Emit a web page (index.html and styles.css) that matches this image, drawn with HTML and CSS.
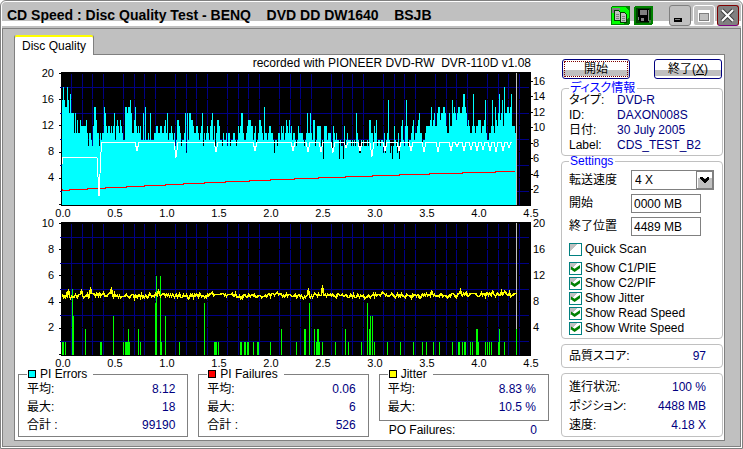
FILE: index.html
```html
<!DOCTYPE html>
<html lang="ja">
    <head>
        <meta charset="utf-8">
        <title>CD Speed : Disc Quality Test</title>
        <link rel="stylesheet" href="styles.css">
    </head>
    <body>

        <div class="window">
            <div class="titlebar">
                <h1 class="caption">CD Speed : Disc Quality Test - BENQ &nbsp;&nbsp; DVD DD DW1640 &nbsp;&nbsp; BSJB</h1>
                <button type="button" class="tool" aria-label="Copy">
                    <svg width="19" height="19" viewBox="0 0 19 19" shape-rendering="crispEdges">
                        <rect width="19" height="19" rx="2" fill="#008000"/>
                        <path d="M1 1h13l4 4v6l-5 7H1z" fill="#00ff00"/>
                        <path d="M1 2h8v2H5v3H1z" fill="#808080"/>
                        <path d="M3.5 4.500h4l2 2v8h-6z" fill="#c0c0c0" stroke="#004000"/>
                        <path d="M9.500 6.500h4l2 2v8h-6z" fill="#c0c0c0" stroke="#004000"/>
                        <path d="M5 8h3M5 10h3M5 12h3M11 10h3M11 12h3M11 14h3" stroke="#808080"/>
                    </svg>
                </button>
                <button type="button" class="tool" aria-label="Save">
                    <svg width="19" height="19" viewBox="0 0 19 19" shape-rendering="crispEdges">
                        <rect width="19" height="19" rx="2" fill="#008000"/>
                        <rect x="2" y="2" width="15" height="15" fill="#004000"/>
                        <path d="M4 3h11v13H6l-2-2z" fill="#000"/>
                        <path d="M6 4h7v5H6z" fill="#808080"/>
                        <path d="M14 4h1v11h-1zM7 12h3v3H7zM4 11h1v3H4z" fill="#808080"/>
                        <path d="M15 14h2v3h-2z" fill="#408040"/>
                    </svg>
                </button>
                <div class="winbtns">
                    <button type="button" class="winbtn min" aria-label="Minimize">
                        <svg width="20" height="20" viewBox="0 0 20 20" shape-rendering="crispEdges">
                            <rect x="4" y="12" width="8" height="4" fill="#000"/>
                            <rect x="5" y="13" width="5" height="1" fill="#808080"/>
                        </svg>
                    </button>
                    <button type="button" class="winbtn max" aria-label="Maximize" disabled>
                        <svg width="20" height="20" viewBox="0 0 20 20" shape-rendering="crispEdges">
                            <path d="M4.500 4.500h11v11h-11z" fill="#c0c0c0" stroke="#fff"/>
                            <path d="M4 4h12v3H4z" fill="#fff"/>
                            <path d="M5.500 7.500h9v7h-9z" fill="#c0c0c0" stroke="#808080"/>
                        </svg>
                    </button>
                    <button type="button" class="winbtn close" aria-label="Close">
                        <svg width="20" height="20" viewBox="0 0 20 20">
                            <path d="M4 4L15 15M15 4L4 15" stroke="#404040" stroke-width="4"/>
                            <path d="M4 4L15 15M15 4L4 15" stroke="#fff" stroke-width="2"/>
                        </svg>
                    </button>
                </div>
            </div>

            <div class="client">
                <div class="tabs">
                    <button type="button" class="tab">Disc Quality</button>
                </div>

                <div class="panel">
                    <div class="left">
                        <p class="recorder">recorded with PIONEER DVD-RW &nbsp;DVR-110D v1.08</p>
                        <svg class="chart" id="pie" viewBox="0 0 531 150"></svg>
                        <svg class="chart" id="pif" viewBox="0 0 531 146"></svg>

                        <div class="stats">
                            <fieldset class="stat">
                                <legend><i class="swatch cyan"></i>PI Errors</legend>
                                <dl>
                                    <dt>平均:</dt><dd>8.12</dd>
                                    <dt>最大:</dt><dd>18</dd>
                                    <dt>合計 :</dt><dd>99190</dd>
                                </dl>
                            </fieldset>
                            <fieldset class="stat">
                                <legend><i class="swatch red"></i>PI Failures</legend>
                                <dl>
                                    <dt>平均:</dt><dd>0.06</dd>
                                    <dt>最大:</dt><dd>6</dd>
                                    <dt>合計 :</dt><dd>526</dd>
                                </dl>
                            </fieldset>
                            <div class="last">
                                <fieldset class="stat jitter">
                                    <legend><i class="swatch yellow"></i>Jitter</legend>
                                    <dl>
                                        <dt>平均:</dt><dd>8.83 %</dd>
                                        <dt>最大:</dt><dd>10.5 %</dd>
                                    </dl>
                                </fieldset>
                                <dl class="po">
                                    <dt>PO Failures:</dt><dd>0</dd>
                                </dl>
                            </div>
                        </div>
                    </div>

                    <div class="right">
                        <div class="buttons">
                            <button type="button" class="btn focused">開始</button>
                            <button type="button" class="btn">終了(<u>X</u>)</button>
                        </div>

                        <fieldset class="group disc">
                            <legend>ディスク情報</legend>
                            <dl>
                                <dt>タイプ:</dt><dd>DVD-R</dd>
                                <dt>ID:</dt><dd>DAXON008S</dd>
                                <dt>日付:</dt><dd>30 July 2005</dd>
                                <dt>Label:</dt><dd>CDS_TEST_B2</dd>
                            </dl>
                        </fieldset>

                        <fieldset class="group settings">
                            <legend>Settings</legend>
                            <div class="field">
                                <label for="speed">転送速度</label>
                                <span class="combo">
                                    <select id="speed">
                                        <option>4 X</option>
                                    </select>
                                    <svg class="arrow" width="17" height="18" viewBox="0 0 17 18" shape-rendering="crispEdges">
                                        <rect x="0.500" y="0.500" width="16" height="17" fill="#fff" stroke="#808080"/>
                                        <rect x="2" y="7" width="14" height="10" fill="#c0c0c0"/>
                                        <path d="M4 6h2l2 2h1l2-2h2v2l-4 4H8L4 8z" fill="#000"/>
                                    </svg>
                                </span>
                            </div>
                            <div class="field">
                                <label for="start">開始</label>
                                <input type="text" id="start" value="0000 MB">
                            </div>
                            <div class="field">
                                <label for="end">終了位置</label>
                                <input type="text" id="end" value="4489 MB">
                            </div>
                            <label class="check quick"><input type="checkbox">Quick Scan</label>
                            <label class="check"><input type="checkbox" checked>Show C1/PIE</label>
                            <label class="check"><input type="checkbox" checked>Show C2/PIF</label>
                            <label class="check"><input type="checkbox" checked>Show Jitter</label>
                            <label class="check"><input type="checkbox" checked>Show Read Speed</label>
                            <label class="check"><input type="checkbox" checked>Show Write Speed</label>
                        </fieldset>

                        <dl class="group score">
                            <dt>品質スコア:</dt><dd>97</dd>
                        </dl>

                        <dl class="group progress">
                            <dt>進行状況:</dt><dd>100 %</dd>
                            <dt>ポジション:</dt><dd>4488 MB</dd>
                            <dt>速度:</dt><dd>4.18 X</dd>
                        </dl>
                    </div>
                </div>
            </div>
        </div>

        <script src="script.js"></script>
    </body>
</html>
```

FILE: styles.css
```css
*{
    box-sizing: border-box;
}

body{
    font-family: "Liberation Sans", "Noto Sans CJK JP", sans-serif;
    font-size: 12px;
    line-height: 15px;
    font-feature-settings: "palt";
    color: #000;
    background-color: #fff;

    margin: 0;
}

h1, p, dl, dd, fieldset{
    margin: 0;
}

button, input, select{
    font: inherit;
    color: inherit;
}

.window{
    min-height: 100vh;
    background-color: #fff;
    border: 1px solid #808080;
    border-radius: 6px 6px 0 0;

    padding: 1px;

    display: flex;
    flex-direction: column;
}

/* title bar */

.titlebar{
    height: 26px;
    background: linear-gradient(#c0c0c0 19px, #fff 19px 24px, #c0c0c0 24px);
    border-radius: 4px 4px 0 0;

    padding: 0 2px 0 5px;

    display: flex;
    align-items: center;
    gap: 4px;
}

.caption{
    font-size: 14px;
    line-height: 26px;
    font-weight: bold;
    white-space: nowrap;

    flex: 1;
}

.tool, .winbtn{
    background: none;
    border: 0;

    padding: 0;

    display: flex;
}

.winbtns{
    display: flex;
    gap: 2px;

    margin-left: 12px;
}

.winbtn{
    width: 22px;
    height: 21px;
    background-color: #c0c0c0;
    border: 1px solid #808080;
    border-radius: 3px;
}

.winbtn.max{
    border-color: #fff;
}

.winbtn.close{
    background-color: #808080;
    border-color: #800000 #800000 #800080;
}

/* tab and its page */

.client{
    background-color: #c0c0c0;
    border: 1px solid #808080;

    padding: 6px 15px 5px 11px;

    flex: 1;
    display: flex;
    flex-direction: column;
}

.tab{
    height: 20px;
    background-color: #fff;
    border: 1px solid #808080;
    border-width: 0 1px 0 1px;
    border-radius: 2px 2px 0 0;
    box-shadow: inset 0 2px #ff0;

    padding: 2px 7px 0;
    margin-bottom: -1px;

    display: block;
    position: relative;
}

.panel{
    background-color: #fff;
    border: 1px solid #808080;

    padding: 0 1px 0 3px;

    flex: 1;
    display: grid;
    grid-template-columns: 1fr 162px;
    gap: 12px;
}

.recorder{
    line-height: 17px;
    text-align: right;

    padding-right: 18px;
}

.chart{
    width: 100%;
    overflow: visible;

    display: block;
}

.chart text{
    font-size: 11px;
}

/* label and value rows */

dl{
    display: grid;
    grid-template-columns: auto auto;
    justify-content: space-between;
}

dd{
    color: #000080;
    text-align: right;
}

.stats{
    display: grid;
    grid-template-columns: 170fr 170fr 170fr;
    column-gap: 10px;
    align-items: start;
}

.stat{
    min-width: 0;
    border: 1px solid #808080;

    padding: 0 12px 2px 8px;
}

.stat legend{
    line-height: 12px;

    padding: 0 6px 0 1px;

    display: flex;
    align-items: center;
    gap: 4px;
}

.stats dl{
    line-height: 18px;
}

.jitter{
    padding-bottom: 4px;
}

.swatch{
    width: 8px;
    height: 8px;
    border: 1px solid #000;
}

.cyan{
    background-color: #0ff;
}

.red{
    background-color: #f00;
}

.yellow{
    background-color: #ff0;
}

.po{
    padding: 0 12px 0 10px;
}

/* right column */

.right{
    padding-top: 4px;
}

.buttons{
    display: flex;
    justify-content: space-between;

    padding: 0 1px;
    margin-bottom: 4px;
}

.btn{
    width: 68px;
    height: 20px;
    line-height: 16px;
    background: linear-gradient(#fff 10px, #c0c0c0 10px 16px, #fff 16px);
    border: 1px solid #000080;
    border-radius: 3px;

    padding: 0;
}

.focused{
    outline: 1px dotted #800000;
    outline-offset: -3px;
}

.group{
    min-width: 0;
    border: 1px solid #c0c0c0;
    border-radius: 4px;

    padding: 0 16px 2px 7px;
}

.group legend{
    line-height: 10px;
    color: #00f;

    padding: 0 2px 0 1px;
}

.disc dl{
    grid-template-columns: 48px 1fr;
}

.disc dd{
    text-align: left;
}

.settings{
    padding-right: 8px;
}

.field{
    display: grid;
    grid-template-columns: 62px 1fr;
    align-items: center;

    margin-top: 4px;
}

.combo{
    position: relative;
}

.field select{
    width: 100%;
    height: 20px;
    appearance: none;
    background-color: #fff;
    border: 1px solid #808080;
    border-radius: 0;

    padding: 0 20px 0 3px;

    display: block;
}

.arrow{
    position: absolute;
    top: 1px;
    right: 1px;
    pointer-events: none;
}

.field input{
    width: 70px;
    height: 19px;
    background-color: #fff;
    border: 1px solid #808080;

    padding: 0 2px;
}

.check{
    height: 15px;

    display: flex;
    align-items: center;
    gap: 3px;
}

.quick{
    margin: 6px 0 4px;
}

.check input{
    width: 13px;
    height: 13px;
    appearance: none;
    background: linear-gradient(135deg, #c0c0c0 32%, #fff 32%);
    border: 1px solid #008080;

    margin: 0;

    display: grid;
    place-items: center;
}

.check input:checked::before{
    content: "";
    width: 9px;
    height: 7px;
    background-color: #008000;
    clip-path: polygon(0 20%, 40% 55%, 100% 0, 100% 45%, 40% 100%, 0 65%);
}

.score{
    line-height: 22px;

    padding-bottom: 0;
    margin-top: 5px;
}

.progress{
    line-height: 19px;

    padding: 4px 16px 1px 7px;
    margin-top: 5px;
}
```

FILE: script.js
```js
const svgns = 'http://www.w3.org/2000/svg';

// plot area inside the svg
const left = 43;
const width = 470;
const height = 134;
const base = 133;

// PI errors for every column, one base 36 digit each
const pie = [
    'gigffigehe', 'eebebdbbdc', 'ccccdb9bba', '9cffdbb9ba', 'bbfecbccbc', 'bceacdcbdc',
    'baaffeffge', 'bbdfcbcbca', 'aeafaabaea', 'aabbccbbcc', 'bbcdbeabbc', 'bab9addcb9',
    'aabe8eaeed', 'dcbbccbabc', 'e9babcbacd', 'eac9bddcaa', '9baab9bb9a', 'abba9acbce',
    'ebaabcdddc', 'cabc9abddc', 'bafbbabccb', 'ba8aa9bbac', 'bcabdcbd',
    'bcabba9acb', 'bbba9abebb', 'ebadd9accc', 'c9a7cccabb', 'b98cbabaa7', 'a997c9abaa',
    'a9a9a9eba8', '8a9a999a9d', 'dbb9cbd9aa', '9aa8b8abga', '8979ca98b7', '9cda9cgc9a',
    'abcdabbcde', 'bb9aabcccc', 'dfcdecceff', 'deeffecbbe', 'ccgefedeff', 'eefhhfecdc',
    'bbchcbccdd', 'dbccdgbaab', 'bcgcbfdceh', 'degcieeffe', 'fhcccb'
].join('');

// PI failures as x, count, number of columns
const pif = [
    [1,1,2],[4,1,1],[11,5,1],[12,3,1],[24,2,1],[39,1,2],[52,3,1],[62,1,1],[64,1,5],[67,2,1],
    [77,2,1],[79,1,1],[94,4,1],[95,6,1],[99,6,1],[100,1,1],[104,3,1],[118,1,1],[143,4,1],
    [153,1,3],[157,1,1],[179,1,2],[183,1,2],[186,1,2],[192,1,1],[196,1,2],[209,1,1],[220,2,1],
    [235,1,1],[243,2,2],[248,4,1],[253,2,1],[255,1,4],[256,2,2],[261,1,1],[274,1,1],[284,2,1],
    [287,1,1],[300,1,1],[306,4,1],[308,2,1],[309,3,1],[311,3,1],[313,1,1],[326,1,1],[339,1,1],
    [352,1,1],[361,1,1],[365,1,1],[372,1,1],[378,1,1],[391,1,1],[397,1,2],[401,1,1],[403,1,2],
    [409,1,1],[411,1,1],[415,2,2],[417,1,1],[424,1,1],[426,1,1],[428,1,1],[430,1,1],[437,1,1],
    [438,2,1],[443,1,1],[455,2,1]
];

function draw(svg, name, attrs, text){
    const el = document.createElementNS(svgns, name);
    for(const key in attrs){
        el.setAttribute(key, attrs[key]);
    }
    if(text !== undefined){
        el.textContent = text;
    }
    svg.appendChild(el);
    return el;
}

function path(svg, d, color, w = 1){
    draw(svg, 'path', {d, fill: 'none', stroke: color, 'stroke-width': w, 'shape-rendering': 'crispEdges'});
}

function drawgrid(svg){
    draw(svg, 'rect', {x: left, y: 0, width, height: height, fill: '#000'});

    const line = {fill: '#000084', 'shape-rendering': 'crispEdges'};
    for(let i = 1; i < 45; i++){
        if(i % 5){
            draw(svg, 'rect', {x: left + Math.round(i * 10.4), y: 2, width: 1, height: base - 2, ...line});
        }
    }

    let gaps = '';
    for(let i = 1; i < 5; i++){
        gaps += `M${left} ${1.5 + i * 26}h${width}`;
    }
    path(svg, gaps, '#000');

    for(let i = 0; i < 5; i++){
        draw(svg, 'rect', {x: left - 1, y: 15 + i * 26, width: width - 1, height: 1, ...line});
    }

    let ticks = '';
    for(let i = 0; i < 6; i++){
        ticks += `M${left - 2} ${1.5 + Math.round(i * 26.2)}h2`;
    }
    path(svg, ticks, '#000');

    for(let i = 0; i < 10; i++){
        draw(svg, 'text', {x: left + 2 + i * 52, y: 145, 'text-anchor': 'middle'}, (i / 2).toFixed(1));
    }
}

function drawpie(){
    const svg = document.querySelector('#pie');
    drawgrid(svg);

    [20, 16, 12, 8, 4].forEach((n, i)=>{
        draw(svg, 'text', {x: left - 7, y: 5 + i * 26, 'text-anchor': 'end'}, n);
    });

    let ticks = '';
    [16, 14, 12, 10, 8, 6, 4, 2].forEach((n, i)=>{
        const y = Math.round(9 + i * 15.45);
        ticks += `M${left + width} ${y + .5}h2`;
        draw(svg, 'text', {x: left + width + 2, y: y + 4}, n);
    });
    path(svg, ticks, '#000');

    let bars = '';
    [...pie].forEach((c, i)=>{
        bars += `M${left + 1.5 + i} ${base}V${Math.round(base - parseInt(c, 36) * 6.55)}`;
    });
    path(svg, bars, '#0ff');

    // write speed
    let red = `M${left + 1} 119v-2`;
    for(let i = 0; i <= 453; i += 3){
        const t = i / 453;
        red += `L${left + 1 + i} ${Math.round(118 - 26 * t + 7 * t * t) + .5}`;
    }
    path(svg, red, '#f00');

    // read speed, with a dip at each of these columns
    const dips = [[76,8],[115,15],[155,9],[194,8],[232,8],[247,9],[260,9],[272,10],[285,5],[299,8],[311,14],
        [324,8],[338,8],[350,8],[363,9],[377,9],[390,8],[396,4],[403,8],[410,7],[416,8],[422,7],[429,8],[435,9],[442,8],[448,5]];
    let white = `M${left + 1} 92l1 -6.500h34l2 38V124l2 -44l1 -9.500`;
    dips.forEach(([x, d])=>{
        white += `L${left + x - 2} 70.500l2 ${d}l2 ${-d}`;
    });
    white += `L${left + 451} 70.500`;
    path(svg, white, '#fff');

    path(svg, `M${left + 455.5} 1V${base}`, '#c0c0c0');
}

function drawpif(){
    const svg = document.querySelector('#pif');
    drawgrid(svg);

    [10, 8, 6, 4, 2].forEach((n, i)=>{
        draw(svg, 'text', {x: left - 7, y: 5 + i * 26, 'text-anchor': 'end'}, n);
        draw(svg, 'text', {x: left + width + 2, y: 5 + i * 26}, n * 2);
    });

    path(svg, `M${left + 455.5} 1V${base}`, '#c0c0c0');

    pif.forEach(([x, n, w])=>{
        const h = Math.round(n * 13.1);
        draw(svg, 'rect', {x: left + x, y: base - h, width: w, height: h, fill: '#0f0', 'shape-rendering': 'crispEdges'});
    });

    // jitter
    const peaks = {7: 67, 20: 67, 29: 65, 50: 65, 97: 67, 247: 66, 261: 63, 370: 68, 399: 68, 431: 68};
    let seed = 7;
    let yellow = '';
    for(let i = 1; i < 456; i++){
        seed = (seed * 1103 + 12345) % 65536;
        const drift = Math.sin(i / 9) * .7 + (i > 395 ? -1 : 0);
        const y = peaks[i] || Math.round(73 + drift + (seed / 65536 - .5) * 4.4);
        yellow += `${i == 1 ? 'M' : 'L'}${left + i + .5} ${y + .5}`;
    }
    path(svg, yellow, '#ff0', 1.5);
}

drawpie();
drawpif();
```
